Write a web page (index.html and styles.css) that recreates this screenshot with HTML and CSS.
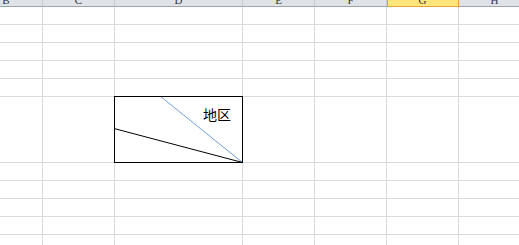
FILE: index.html
```html
<!DOCTYPE html>
<html lang="en">
<head>
<meta charset="UTF-8">
<title>Sheet</title>
<link rel="stylesheet" href="styles.css">
</head>
<body>

<div class="sheet">
    <div class="head">B</div>
    <div class="head">C</div>
    <div class="head">D</div>
    <div class="head">E</div>
    <div class="head">F</div>
    <div class="head active">G</div>
    <div class="head">H</div>

    <div class="cell"></div><div class="cell"></div><div class="cell"></div><div class="cell"></div><div class="cell"></div><div class="cell"></div><div class="cell"></div>
    <div class="cell"></div><div class="cell"></div><div class="cell"></div><div class="cell"></div><div class="cell"></div><div class="cell"></div><div class="cell"></div>
    <div class="cell"></div><div class="cell"></div><div class="cell"></div><div class="cell"></div><div class="cell"></div><div class="cell"></div><div class="cell"></div>
    <div class="cell"></div><div class="cell"></div><div class="cell"></div><div class="cell"></div><div class="cell"></div><div class="cell"></div><div class="cell"></div>
    <div class="cell"></div><div class="cell"></div><div class="cell"></div><div class="cell"></div><div class="cell"></div><div class="cell"></div><div class="cell"></div>

    <div class="cell"></div>
    <div class="cell"></div>
    <div class="cell split">
        <svg class="diag" width="129" height="67" viewBox="0 0 129 67">
            <line x1="46" y1="0" x2="128.5" y2="66.5" stroke="#6f9fd8" stroke-width="1"/>
            <line x1="0" y1="32.5" x2="128.5" y2="66.5" stroke="#000" stroke-width="1"/>
            <rect x="0.5" y="0.5" width="128" height="66" fill="none" stroke="#000" stroke-width="1"/>
        </svg>
        <span class="label">地区</span>
    </div>
    <div class="cell"></div>
    <div class="cell"></div>
    <div class="cell"></div>
    <div class="cell"></div>

    <div class="cell"></div><div class="cell"></div><div class="cell"></div><div class="cell"></div><div class="cell"></div><div class="cell"></div><div class="cell"></div>
    <div class="cell"></div><div class="cell"></div><div class="cell"></div><div class="cell"></div><div class="cell"></div><div class="cell"></div><div class="cell"></div>
    <div class="cell"></div><div class="cell"></div><div class="cell"></div><div class="cell"></div><div class="cell"></div><div class="cell"></div><div class="cell"></div>
    <div class="cell"></div><div class="cell"></div><div class="cell"></div><div class="cell"></div><div class="cell"></div><div class="cell"></div><div class="cell"></div>
    <div class="cell"></div><div class="cell"></div><div class="cell"></div><div class="cell"></div><div class="cell"></div><div class="cell"></div><div class="cell"></div>
</div>

</body>
</html>
```

FILE: styles.css
```css
*{
    margin:0;
    padding:0;
    box-sizing:border-box;
}

body{
    background:#fff;
    width:519px;
    height:245px;
    overflow:hidden;
}

.sheet{
    display:grid;
    grid-template-columns:73px 72px 128px 72px 72px 72px 72px;
    grid-template-rows:7px repeat(5,18px) 66px repeat(5,18px);
    margin-left:-30px;
    width:561px;
}

.head{
    background:#dfe3e8;
    border-right:1px solid #c6cbd1;
    border-bottom:1px solid #9ea4ab;
    font-family:"Liberation Serif",serif;
    font-size:11px;
    line-height:1px;
    text-align:center;
    color:#333;
}

.head.active{
    background:#ffe57c;
    border-right:1px solid #e6a33a;
    border-bottom:1px solid #e6a33a;
    box-shadow:inset 1px 0 0 #e6a33a;
}

.cell{
    border-right:1px solid #dadada;
    border-bottom:1px solid #dadada;
}

.split{
    position:relative;
    display:flex;
    justify-content:flex-end;
    align-items:flex-start;
    padding:9px 11px 0 0;
}

.diag{
    position:absolute;
    left:-1px;
    top:-1px;
}

.label{
    position:relative;
    font-family:"Noto Sans CJK SC",sans-serif;
    font-size:14px;
    line-height:16px;
    color:#000;
}
```
